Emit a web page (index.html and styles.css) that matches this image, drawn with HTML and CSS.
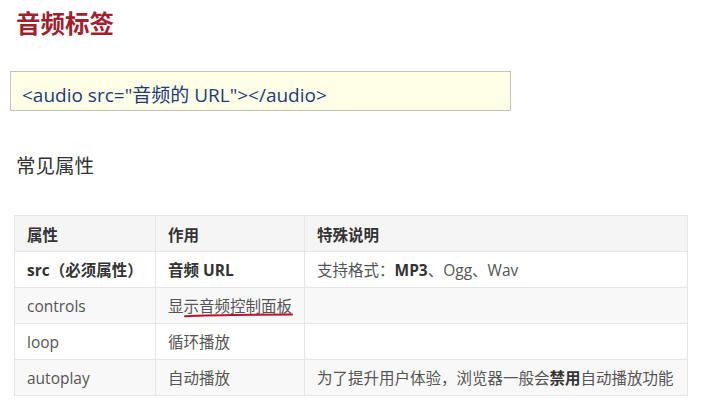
FILE: index.html
```html
<!DOCTYPE html>
<html lang="zh-CN">
<head>
<meta charset="utf-8">
<link rel="stylesheet" href="styles.css">
</head>
<body>
<div class="page">
  <h1 class="title">音频标签</h1>
  <div class="code">&lt;audio src="音频的 URL"&gt;&lt;/audio&gt;</div>
  <h2 class="subtitle">常见属性</h2>
  <table class="attrs">
    <colgroup><col class="c1"><col class="c2"><col class="c3"></colgroup>
    <thead>
      <tr><th>属性</th><th>作用</th><th>特殊说明</th></tr>
    </thead>
    <tbody>
      <tr><td><b>src（必须属性）</b></td><td><b>音频 URL</b></td><td>支持格式：<b>MP3</b>、Ogg、Wav</td></tr>
      <tr class="alt"><td>controls</td><td><span class="marked">显示音频控制面板<svg class="ink" viewBox="0 0 110 6" width="110" height="6"><path d="M1 4.2 C 20 3.2, 60 2.6, 108 2.4" fill="none" stroke="#c0102c" stroke-width="2" stroke-linecap="round"/></svg></span></td><td></td></tr>
      <tr><td>loop</td><td>循环播放</td><td></td></tr>
      <tr class="alt"><td>autoplay</td><td>自动播放</td><td>为了提升用户体验，浏览器一般会<b>禁用</b>自动播放功能</td></tr>
    </tbody>
  </table>
</div>
</body>
</html>
```
FILE: styles.css
```css
html, body {
  margin: 0;
  padding: 0;
  background: #ffffff;
}
.page {
  padding: 6px 0 0 10px;
  font-family: "Open Sans", "Noto Sans CJK SC", sans-serif;
  color: #333;
}
.title {
  margin: 0 0 0 6px;
  font-family: "Noto Sans CJK SC", sans-serif;
  font-size: 24.5px;
  line-height: 34px;
  font-weight: 700;
  color: #a11f2f;
}
.code {
  margin-top: 31px;
  height: 38px;
  box-sizing: content-box;
  padding: 0 0 0 11px;
  border: 1px solid #c4c4b4;
  background: #ffffe8;
  color: #233a78;
  font-size: 19px;
  line-height: 47px;
  width: 488px;
  white-space: nowrap;
  overflow: hidden;
}
.subtitle {
  margin: 40px 0 0 6px;
  font-family: "Noto Sans CJK SC", sans-serif;
  font-size: 19.5px;
  line-height: 28px;
  font-weight: 400;
  color: #333;
}
.attrs {
  margin: 36px 0 0 4px;
  border-collapse: collapse;
  table-layout: fixed;
  width: 673px;
  font-size: 15.5px;
  color: #555;
  border: 1px solid #e6e6e6;
}
.c1 { width: 141px; }
.c2 { width: 149px; }
.c3 { width: 383px; }
.attrs th, .attrs td {
  border: 1px solid #e6e6e6;
  padding: 0 0 0 12px;
  height: 35px;
  text-align: left;
  white-space: nowrap;
}
.attrs th {
  background: #f5f5f5;
  font-weight: 700;
  color: #333;
  font-family: "Noto Sans CJK SC", sans-serif;
}
.attrs b {
  color: #333;
  font-weight: 700;
}
.attrs tr.alt td {
  background: #f8f8f8;
}
.marked {
  position: relative;
}
.ink {
  position: absolute;
  left: 16px;
  top: 17px;
}
```
